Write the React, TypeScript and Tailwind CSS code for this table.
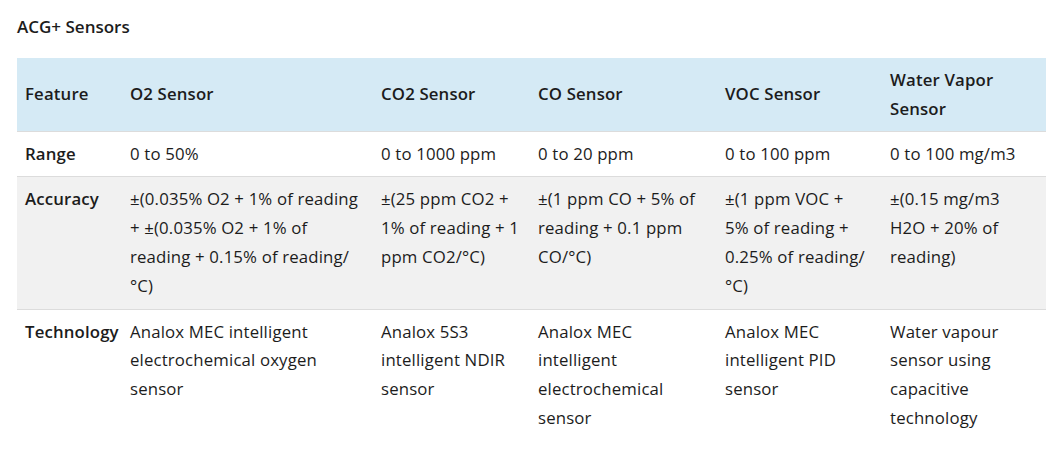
import React from "react";

interface Row {
  feature: string;
  cells: string[][];
  shaded?: boolean;
}

const headers: string[][] = [
  ["Feature"],
  ["O2 Sensor"],
  ["CO2 Sensor"],
  ["CO Sensor"],
  ["VOC Sensor"],
  ["Water Vapor", "Sensor"],
];

const rows: Row[] = [
  {
    feature: "Range",
    cells: [["0 to 50%"], ["0 to 1000 ppm"], ["0 to 20 ppm"], ["0 to 100 ppm"], ["0 to 100 mg/m3"]],
  },
  {
    feature: "Accuracy",
    shaded: true,
    cells: [
      ["±(0.035% O2 + 1% of reading", "+ ±(0.035% O2 + 1% of", "reading + 0.15% of reading/", "°C)"],
      ["±(25 ppm CO2 +", "1% of reading + 1", "ppm CO2/°C)"],
      ["±(1 ppm CO + 5% of", "reading + 0.1 ppm", "CO/°C)"],
      ["±(1 ppm VOC +", "5% of reading +", "0.25% of reading/", "°C)"],
      ["±(0.15 mg/m3", "H2O + 20% of", "reading)"],
    ],
  },
  {
    feature: "Technology",
    cells: [
      ["Analox MEC intelligent", "electrochemical oxygen", "sensor"],
      ["Analox 5S3", "intelligent NDIR", "sensor"],
      ["Analox MEC", "intelligent", "electrochemical", "sensor"],
      ["Analox MEC", "intelligent PID", "sensor"],
      ["Water vapour", "sensor using", "capacitive", "technology"],
    ],
  },
];

const widths = ["w-[105px]", "w-[251px]", "w-[157px]", "w-[187px]", "w-[165px]", "w-[164px]"];

function Lines({ lines }: { lines: string[] }) {
  return (
    <>
      {lines.map((l, i) => (
        <span key={i} className="block whitespace-nowrap">
          {l}
        </span>
      ))}
    </>
  );
}

export default function App() {
  return (
    <div className="w-[1062px] h-[454px] bg-white text-[#1c1c1c] font-['Open_Sans','Noto_Sans',sans-serif] px-[17px] pt-[15px]">
      <h2 className="text-[17px] font-semibold leading-[24px] mb-[19px]">ACG+ Sensors</h2>
      <table className="table-fixed border-collapse w-[1029px] text-[16.8px] leading-[28.8px] tracking-[0.15px]">
        <thead>
          <tr className="bg-[#d5eaf5] border-b border-[#dcdcdc]">
            {headers.map((h, i) => (
              <th key={i} className={`${widths[i]} text-left align-middle font-semibold px-2 pt-[8px] pb-[7px]`}>
                <Lines lines={h} />
              </th>
            ))}
          </tr>
        </thead>
        <tbody>
          {rows.map((r) => (
            <tr key={r.feature} className={`${r.shaded ? "bg-[#f1f1f1] border-b border-[#dcdcdc]" : "bg-white border-b border-[#dcdcdc] last:border-b-0"}`}>
              <td className="align-top font-semibold px-2 py-2 whitespace-nowrap">{r.feature}</td>
              {r.cells.map((c, i) => (
                <td key={i} className="align-top px-2 py-2">
                  <Lines lines={c} />
                </td>
              ))}
            </tr>
          ))}
        </tbody>
      </table>
    </div>
  );
}
